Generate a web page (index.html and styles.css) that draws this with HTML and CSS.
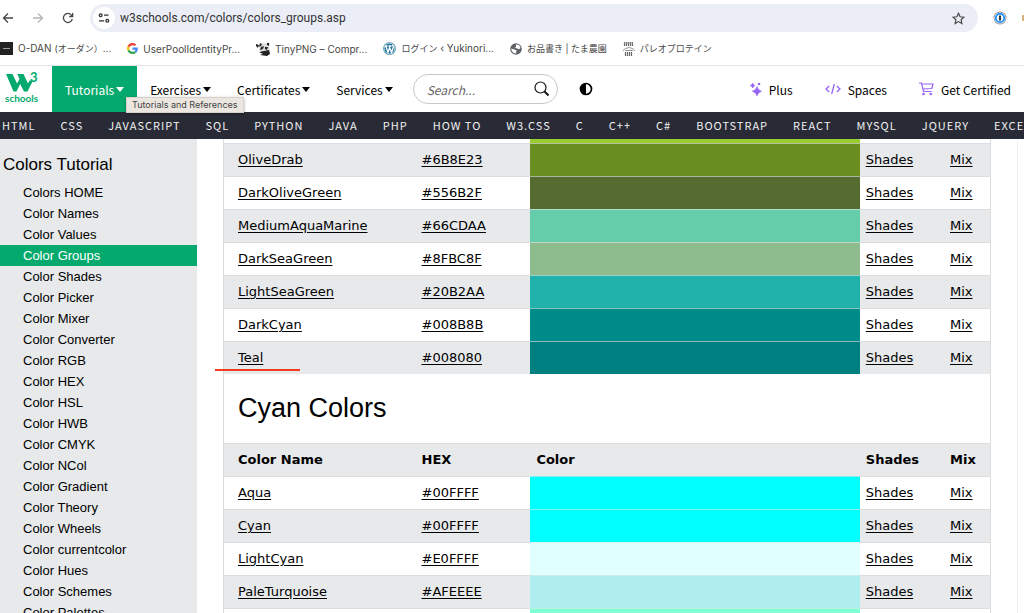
FILE: index.html
```
<!DOCTYPE html>
<html lang="en">
<head>
<meta charset="utf-8">
<title>HTML Color Groups</title>
<link rel="stylesheet" href="styles.css">
</head>
<body>
<header class="chrome">
  <div class="toolbar">
    <button class="tool" aria-label="Back"><svg width="12" height="12" viewBox="0 0 12 12"><path d="M11 6H2M6 1.5L1.5 6L6 10.5" fill="none" stroke="#474747" stroke-width="1.3"/></svg></button>
    <button class="tool" aria-label="Forward"><svg width="12" height="12" viewBox="0 0 12 12"><path d="M1 6H10M6 1.5L10.500 6L6 10.500" fill="none" stroke="#b5b5b8" stroke-width="1.3"/></svg></button>
    <button class="tool" aria-label="Reload"><svg width="12" height="12" viewBox="0 0 12 12"><path d="M10.300 7A4.500 4.500 0 1 1 9.400 3.100L10.500 4.300M10.700 1V4.500H7.200" fill="none" stroke="#474747" stroke-width="1.300"/></svg></button>
    <div class="omnibox">
      <button class="site-info" aria-label="Site information"><svg width="12" height="12" viewBox="0 0 12 12"><g fill="none" stroke="#333" stroke-width="1.300"><circle cx="2.700" cy="3.200" r="1.400"/><path d="M6 3.200H10.500M1 8.800H6"/><circle cx="9.300" cy="8.800" r="1.400"/></g></svg></button>
      <input class="url" type="text" aria-label="Address" value="w3schools.com/colors/colors_groups.asp">
      <button class="star" aria-label="Bookmark"><svg width="13" height="13" viewBox="0 0 13 13"><path d="M6.500 1.300L8.100 4.800L12 5.200L9.100 7.800L9.900 11.600L6.500 9.600L3.100 11.600L3.900 7.800L1 5.200L4.900 4.800Z" fill="none" stroke="#474747" stroke-width="1.200"/></svg></button>
    </div>
    <button class="extension" aria-label="1Password"><svg width="14" height="14" viewBox="0 0 14 14"><circle cx="7" cy="7" r="6.500" fill="#8b8d91"/><circle cx="7" cy="7" r="5.600" fill="#fff"/><circle cx="7" cy="7" r="4.200" fill="#fff" stroke="#1a8cff" stroke-width="1.800"/><rect x="6" y="4.500" width="2" height="5" rx=".5" fill="#333"/></svg></button>
    <span class="next-extension"></span>
  </div>
  <nav class="bookmarks" aria-label="Bookmarks">
    <a href="#"><svg width="13" height="13" viewBox="0 0 13 13"><rect width="13" height="13" fill="#222"/><path d="M3 6.500H10" stroke="#999"/></svg><span>O-DAN <span class="kana">(オーダン）</span>...</span></a>
    <a href="#"><svg width="11" height="11" viewBox="0 0 48 48"><path fill="#EA4335" d="M24 9.500c3.500 0 6.700 1.200 9.200 3.600l6.900-6.900C35.900 2.400 30.500 0 24 0 14.600 0 6.500 5.400 2.600 13.200l8 6.200C12.400 13.700 17.700 9.500 24 9.500z"/><path fill="#4285F4" d="M47 24.600c0-1.600-.2-3.100-.4-4.600H24v9h12.900c-.6 3-2.300 5.500-4.800 7.200l7.700 6C44.400 38 47 31.800 47 24.600z"/><path fill="#FBBC05" d="M10.500 28.600c-.5-1.500-.8-3-.8-4.600s.3-3.100.8-4.600l-8-6.200C.9 16.500 0 20.100 0 24s.9 7.500 2.600 10.800z"/><path fill="#34A853" d="M24 48c6.500 0 11.900-2.100 15.900-5.800l-7.700-6c-2.200 1.500-4.900 2.300-8.200 2.300-6.300 0-11.600-4.200-13.500-9.900l-8 6.200C6.500 42.600 14.600 48 24 48z"/></svg>UserPoolIdentityPr...</a>
    <a href="#"><svg width="14" height="14" viewBox="0 0 14 14"><path d="M4 4C5 1 11 0 13 4L14 9L12 13H4L6 10L3 8Z" fill="#ddd"/><path d="M0 2L3 3L2 6L0 4ZM4 1L6 2L5 4L3 5ZM11 1Q14 0 13 4L11 3ZM5 5L8 4L7 7L4 8ZM9 5L12 5L11 8L9 7ZM3 10L8 9L13 8L14 12L11 14L4 13L7 12Z" fill="#222"/></svg>TinyPNG – Compr...</a>
    <a href="#"><svg width="13" height="13" viewBox="0 0 13 13"><circle cx="6.500" cy="6.500" r="6.300" fill="#21759b"/><circle cx="6.500" cy="6.500" r="5.400" fill="none" stroke="#fff" stroke-width=".7"/><path d="M1.800 4H4.500M5.500 4H8.500M2.800 4L5 10.300L6.700 5.500M6 4L8.500 10.300L10.300 5.500Q10.500 4 9.300 2.700" fill="none" stroke="#fff" stroke-width="1.300"/></svg><span><span class="kana">ログイン</span> ‹ Yukinori...</span></a>
    <a href="#"><svg width="12" height="12" viewBox="0 0 12 12"><circle cx="6" cy="6" r="5.800" fill="#5f6368"/><path d="M6 1.500Q10 1 10.500 5Q9 7 7.500 5.500L5 5L6 3.500ZM1.200 5.500L4.500 6.500L6.500 7.500L6 10.500Q2 10.500 1.200 5.500Z" fill="#fff"/></svg><span class="kana">お品書き | たま農園</span></a>
    <a href="#"><svg width="12" height="14" viewBox="0 0 12 14"><path d="M1.500 0V4M3.500 0V4M5.500 0V4M7.500 0V4M9.500 0V4M2.500 10V14M4.500 10V14M6.500 10V14M8.500 10V14" stroke="#666" stroke-width="1.200"/><path d="M0 9Q1 6 6 5.500Q11 6 12 9M2 8.500H10M1 1H10" fill="none" stroke="#999"/></svg><span class="kana">パレオプロテイン</span></a>
  </nav>
</header>

<div class="topnav">
  <a class="logo" href="#" aria-label="W3Schools home">
    <svg width="42" height="40" viewBox="0 -3 42 40" fill="#04AA6D"><path d="M1 3H7.500L12 12.500L14.500 8L12.300 3H18.500L23 12.500L24.500 9.500H28L22.500 20.500H19L15.200 13L11.500 20.500H8.500Z"/><text class="logo-three" x="25" y="11">3</text><text class="logo-name" x="0" y="31">schools</text></svg>
  </a>
  <nav class="primary">
    <div class="has-tip">
      <button class="nav-item active">Tutorials<svg width="8" height="5" viewBox="0 0 8 5"><path d="M0 0H8L4 5Z" fill="currentColor"/></svg></button>
      <span class="tip" role="tooltip">Tutorials and References</span>
    </div>
    <button class="nav-item">Exercises<svg width="8" height="5" viewBox="0 0 8 5"><path d="M0 0H8L4 5Z" fill="currentColor"/></svg></button>
    <button class="nav-item">Certificates<svg width="8" height="5" viewBox="0 0 8 5"><path d="M0 0H8L4 5Z" fill="currentColor"/></svg></button>
    <button class="nav-item">Services<svg width="8" height="5" viewBox="0 0 8 5"><path d="M0 0H8L4 5Z" fill="currentColor"/></svg></button>
  </nav>
  <form class="search">
    <input type="text" placeholder="Search..." aria-label="Search">
    <button type="button" aria-label="Search"><svg width="16" height="16" viewBox="0 0 16 16"><circle cx="6.500" cy="6.500" r="5.500" fill="none" stroke="#111" stroke-width="1.200"/><path d="M10.500 10.500L14.500 14.500" stroke="#111" stroke-width="2"/></svg></button>
  </form>
  <button class="contrast" aria-label="Dark mode"><svg width="14" height="14" viewBox="0 0 14 14"><circle cx="7" cy="7" r="5.500" fill="#fff" stroke="#000" stroke-width="1.700"/><path d="M7 1.500A5.500 5.500 0 0 0 7 12.500Z"/></svg></button>
  <nav class="account">
    <a href="#"><svg width="12" height="14" viewBox="0 0 12 14" fill="#9763f6"><path d="M7 4.500Q8 8.200 11.500 9.200Q8 10.200 7 14Q6 10.200 2.300 9.200Q6 8.200 7 4.500ZM2.700 1Q3.200 3 5 3.500Q3.200 4 2.700 6Q2.200 4 .3 3.500Q2.200 3 2.700 1Z" stroke="#9763f6" stroke-width=".6"/><circle cx="9" cy="2" r="1.300"/></svg>Plus</a>
    <a href="#"><svg width="16" height="12" viewBox="0 0 16 12"><path d="M4.200 3L1 6L4.200 9M11.800 3L15 6L11.800 9M9.300 1L6.700 11" fill="none" stroke="#9763f6" stroke-width="1.300"/></svg>Spaces</a>
    <a href="#"><svg width="15" height="14" viewBox="0 0 15 14"><path d="M0 1H2.500L4.500 9.500H12.500M3 2H14L12.800 6.500L4 7" fill="none" stroke="#9763f6" stroke-width="1.200"/><circle cx="4.500" cy="12" r="1.300" fill="#9763f6"/><circle cx="11.800" cy="12" r="1.300" fill="#9763f6"/></svg>Get Certified</a>
  </nav>
</div>

<nav class="subjects" aria-label="Subjects">
  <a href="#">HTML</a><a href="#">CSS</a><a href="#">JAVASCRIPT</a><a href="#">SQL</a><a href="#">PYTHON</a><a href="#">JAVA</a><a href="#">PHP</a><a href="#">HOW TO</a><a href="#">W3.CSS</a><a href="#">C</a><a href="#">C++</a><a href="#">C#</a><a href="#">BOOTSTRAP</a><a href="#">REACT</a><a href="#">MYSQL</a><a href="#">JQUERY</a><a href="#">EXCEL</a>
</nav>

<div class="page">
  <aside class="sidebar">
    <h2>Colors Tutorial</h2>
    <a href="#">Colors HOME</a>
    <a href="#">Color Names</a>
    <a href="#">Color Values</a>
    <a href="#" class="current">Color Groups</a>
    <a href="#">Color Shades</a>
    <a href="#">Color Picker</a>
    <a href="#">Color Mixer</a>
    <a href="#">Color Converter</a>
    <a href="#">Color RGB</a>
    <a href="#">Color HEX</a>
    <a href="#">Color HSL</a>
    <a href="#">Color HWB</a>
    <a href="#">Color CMYK</a>
    <a href="#">Color NCol</a>
    <a href="#">Color Gradient</a>
    <a href="#">Color Theory</a>
    <a href="#">Color Wheels</a>
    <a href="#">Color currentcolor</a>
    <a href="#">Color Hues</a>
    <a href="#">Color Schemes</a>
    <a href="#">Color Palettes</a>
  </aside>
  <main class="content">
    <table class="colors">
      <colgroup><col class="c-name"><col class="c-hex"><col class="c-color"><col class="c-shades"><col class="c-mix"></colgroup>
      <tbody>
        <tr class="cut"><td></td><td></td><td class="yellowgreen"></td><td></td><td></td></tr>
        <tr><td><a href="#">OliveDrab</a></td><td><a href="#">#6B8E23</a></td><td class="olivedrab"></td><td><a href="#">Shades</a></td><td><a href="#">Mix</a></td></tr>
        <tr><td><a href="#">DarkOliveGreen</a></td><td><a href="#">#556B2F</a></td><td class="darkolivegreen"></td><td><a href="#">Shades</a></td><td><a href="#">Mix</a></td></tr>
        <tr><td><a href="#">MediumAquaMarine</a></td><td><a href="#">#66CDAA</a></td><td class="mediumaquamarine"></td><td><a href="#">Shades</a></td><td><a href="#">Mix</a></td></tr>
        <tr><td><a href="#">DarkSeaGreen</a></td><td><a href="#">#8FBC8F</a></td><td class="darkseagreen"></td><td><a href="#">Shades</a></td><td><a href="#">Mix</a></td></tr>
        <tr><td><a href="#">LightSeaGreen</a></td><td><a href="#">#20B2AA</a></td><td class="lightseagreen"></td><td><a href="#">Shades</a></td><td><a href="#">Mix</a></td></tr>
        <tr><td><a href="#">DarkCyan</a></td><td><a href="#">#008B8B</a></td><td class="darkcyan"></td><td><a href="#">Shades</a></td><td><a href="#">Mix</a></td></tr>
        <tr><td class="marked"><a href="#">Teal</a></td><td><a href="#">#008080</a></td><td class="teal"></td><td><a href="#">Shades</a></td><td><a href="#">Mix</a></td></tr>
      </tbody>
    </table>
    <h2>Cyan Colors</h2>
    <table class="colors">
      <colgroup><col class="c-name"><col class="c-hex"><col class="c-color"><col class="c-shades"><col class="c-mix"></colgroup>
      <thead><tr><th>Color Name</th><th>HEX</th><th>Color</th><th>Shades</th><th>Mix</th></tr></thead>
      <tbody>
        <tr><td><a href="#">Aqua</a></td><td><a href="#">#00FFFF</a></td><td class="cyan"></td><td><a href="#">Shades</a></td><td><a href="#">Mix</a></td></tr>
        <tr><td><a href="#">Cyan</a></td><td><a href="#">#00FFFF</a></td><td class="cyan"></td><td><a href="#">Shades</a></td><td><a href="#">Mix</a></td></tr>
        <tr><td><a href="#">LightCyan</a></td><td><a href="#">#E0FFFF</a></td><td class="lightcyan"></td><td><a href="#">Shades</a></td><td><a href="#">Mix</a></td></tr>
        <tr><td><a href="#">PaleTurquoise</a></td><td><a href="#">#AFEEEE</a></td><td class="paleturquoise"></td><td><a href="#">Shades</a></td><td><a href="#">Mix</a></td></tr>
        <tr><td></td><td></td><td class="aquamarine"></td><td></td><td></td></tr>
      </tbody>
    </table>
  </main>
  <div class="rail"></div>
</div>
</body>
</html>
```
FILE: styles.css
```
* { box-sizing: border-box; }
body {
  margin: 0;
  height: 100vh;
  display: flex;
  flex-direction: column;
  overflow: hidden;
  background: #fff;
  color: #000;
  font-family: "DejaVu Sans", sans-serif;
  font-size: 13px;
}
a { color: inherit; text-decoration: none; }
button { border: 0; background: none; padding: 0; margin: 0; color: inherit; font: inherit; display: flex; align-items: center; }
svg { display: block; flex: none; }

/* Browser window */
.chrome { font-family: Inter, "Noto Sans CJK JP", sans-serif; flex: none; border-bottom: 1px solid #e4e4e6; }
.toolbar { display: flex; align-items: center; height: 36px; padding-left: 2px; }
.tool { width: 30px; height: 28px; flex: none; }
.omnibox { flex: 1; display: flex; align-items: center; height: 28px; margin-left: -2px; padding: 0 13px 0 3px; border-radius: 14px; background: #eceef7; }
.site-info { width: 22px; height: 22px; justify-content: center; border-radius: 50%; background: #fff; }
.url { flex: 1; min-width: 0; margin: 0; padding: 0 5px; border: 0; background: none; color: #333; font: 12px Roboto, sans-serif; }
.extension { margin-left: 15px; }
.next-extension { width: 2px; height: 6px; margin-left: 15px; background: #d7b27a; }
.bookmarks { display: flex; align-items: center; gap: 16px; height: 29px; padding-bottom: 4px; color: #474747; font-size: 10px; white-space: nowrap; }
.bookmarks a { display: flex; align-items: center; gap: 5px; }
.kana { font-size: 9px; }

/* Site navigation */
.topnav { flex: none; display: flex; align-items: stretch; height: 46px; font-family: "Noto Sans CJK JP", sans-serif; font-size: 12px; white-space: nowrap; }
.logo { width: 52px; padding: 2px 0 0 5px; }
.logo-three { font: bold 13px Lato, sans-serif; }
.logo-name { font: bold 10px Lato, sans-serif; }
.primary { display: flex; }
.nav-item { height: 100%; gap: 2px; padding: 0 13px; }
.nav-item.active { background: #04aa6d; color: #fff; }
.has-tip { position: relative; }
.tip { position: absolute; z-index: 2; left: 74px; top: 31px; padding: 0 5px; border: 1px solid #d6d2cb; background: #ebe6df; color: #444; box-shadow: 0 1px 3px rgba(0, 0, 0, .3); font: 9px/14px Inter, sans-serif; }
.search { display: flex; align-items: center; width: 145px; height: 30px; margin: 8px 0 0 7px; padding: 0 7px 0 13px; border: 1px solid #c8c8c8; border-radius: 15px; }
.search input { flex: 1; min-width: 0; padding: 0; border: 0; background: none; font: italic 12px "Noto Sans CJK JP", sans-serif; }
.search input::placeholder { color: #666; opacity: 1; }
.contrast { margin-left: 21px; }
.account { display: flex; align-items: center; gap: 32px; margin-left: auto; padding-right: 13px; }
.account a { display: flex; align-items: center; gap: 7px; }
.subjects { flex: none; display: flex; align-items: center; gap: 25px; height: 27px; padding: 0 0 2px 2px; overflow: hidden; background: #282a35; color: #f1f1f1; font: 11px "Noto Sans CJK JP", sans-serif; letter-spacing: 1px; white-space: nowrap; }

/* Page */
.page { flex: 1; min-height: 0; display: grid; grid-template-columns: 197px 1fr 7px; overflow: hidden; }
.sidebar { background: #e7e9eb; padding-top: 14px; font-family: "Liberation Sans", sans-serif; }
.sidebar h2 { margin: 0 0 5px 3px; font-size: 17px; line-height: 24px; font-weight: 400; }
.sidebar a { display: block; padding-left: 23px; line-height: 21px; }
.sidebar .current { background: #04aa6d; color: #fff; }
.content { margin: 0 26px 0 26px; border: 1px solid #dcdcdc; border-width: 0 1px; }
.content h2 { margin: 0; padding: 0 14px; font: 27px/69px "Liberation Sans", sans-serif; }
.rail { border-left: 1px solid #f1f1f1; }

.colors { width: 100%; table-layout: fixed; border-collapse: separate; border-spacing: 0; }
.c-name { width: 25%; }
.c-hex { width: 15%; }
.c-color { width: 43%; }
.c-shades { width: 11%; }
.c-mix { width: 6%; }
.colors tr { height: 33px; }
.colors .cut { height: 4px; }
.colors thead tr, .colors tbody tr:nth-child(even) { background: #e7e9eb; }
.colors td, .colors th { padding: 0 6px; border-top: 1px solid #dcdddf; text-align: left; line-height: 20px; white-space: nowrap; }
.colors .cut td { border-top: 0; }
.colors td:first-child, .colors th:first-child { padding-left: 14px; }
.colors td a { text-decoration: underline; text-underline-offset: 2px; }
.colors td:nth-child(3) { border-top-color: rgba(230, 230, 230, .6); }
.marked { position: relative; }
.marked::after { content: ""; position: absolute; left: -9px; top: 27px; width: 85px; height: 2px; background: #f53b1f; }
.yellowgreen { background: #9acd32; }
.olivedrab { background: #6b8e23; }
.darkolivegreen { background: #556b2f; }
.mediumaquamarine { background: #66cdaa; }
.darkseagreen { background: #8fbc8f; }
.lightseagreen { background: #20b2aa; }
.darkcyan { background: #008b8b; }
.teal { background: #008080; }
.cyan { background: #00ffff; }
.lightcyan { background: #e0ffff; }
.paleturquoise { background: #afeeee; }
.aquamarine { background: #7fffd4; }
```
